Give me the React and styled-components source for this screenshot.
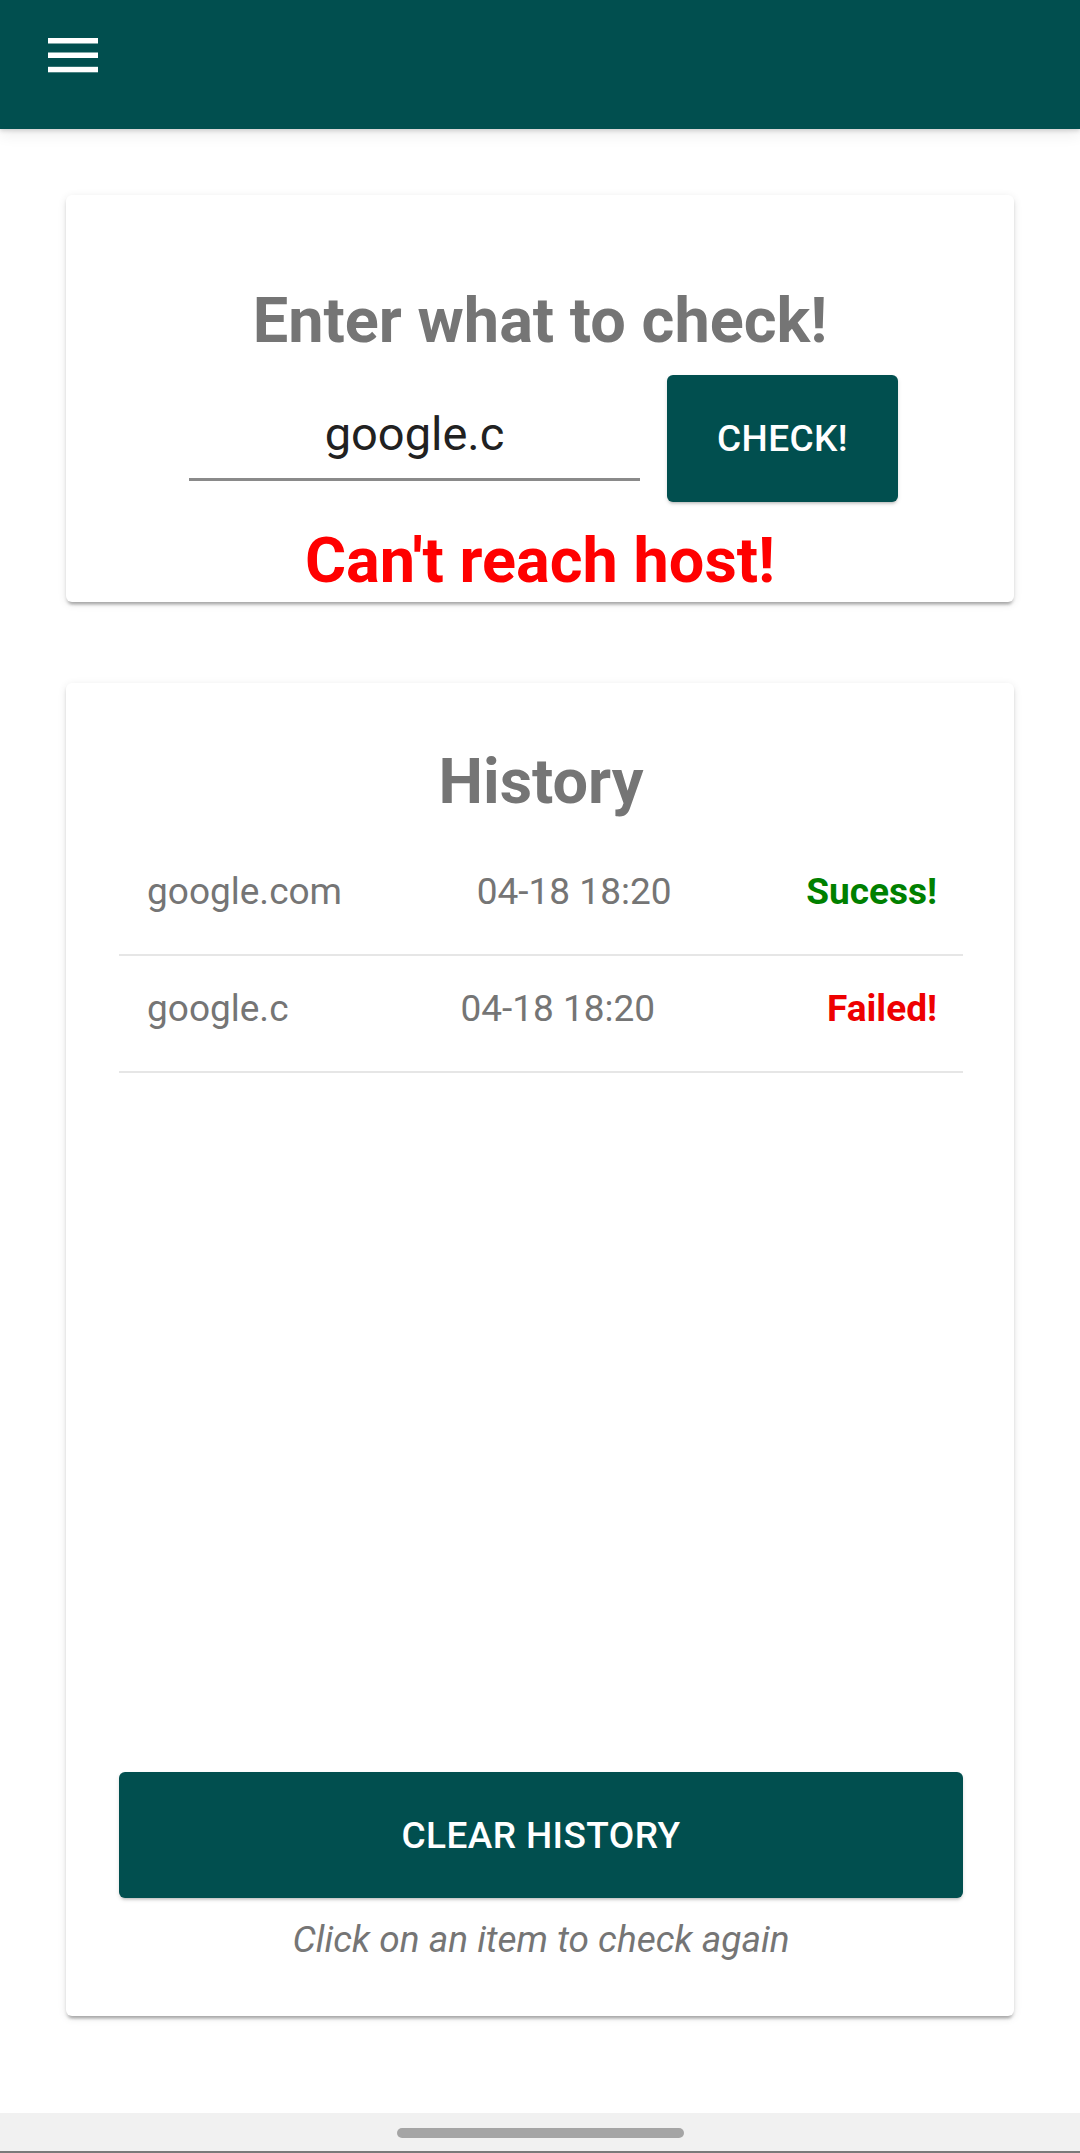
import React from "react";
import styled, { createGlobalStyle } from "styled-components";

const GlobalStyle = createGlobalStyle`
  html, body {
    margin: 0;
    padding: 0;
    background: #fff;
    font-family: Roboto, "Noto Sans", "Liberation Sans", sans-serif;
  }
  * {
    box-sizing: border-box;
  }
`;

const history = [
  { host: "google.com", time: "04-18 18:20", ok: true },
  { host: "google.c", time: "04-18 18:20", ok: false }
];

const App = () => {
  return (
    <Screen>
      <GlobalStyle />
      <TopBar>
        <MenuButton aria-label="menu">
          <svg width="50" height="35" viewBox="0 0 50 35">
            <rect x="0" y="0" width="50" height="5.5" fill="#fff" />
            <rect x="0" y="14.5" width="50" height="5.5" fill="#fff" />
            <rect x="0" y="28.8" width="50" height="5.5" fill="#fff" />
          </svg>
        </MenuButton>
      </TopBar>

      <Main>
        <CheckCard>
          <Title>Enter what to check!</Title>
          <CheckRow>
            <HostInput defaultValue="google.c" />
            <CheckButton>CHECK!</CheckButton>
          </CheckRow>
          <ErrorText>Can't reach host!</ErrorText>
        </CheckCard>

        <HistoryCard>
          <Title>History</Title>
          <List>
            {history.map((item, i) => (
              <Row key={i}>
                <Cell>{item.host}</Cell>
                <Cell>{item.time}</Cell>
                <Status ok={item.ok}>{item.ok ? "Sucess!" : "Failed!"}</Status>
              </Row>
            ))}
          </List>
          <ClearButton>CLEAR HISTORY</ClearButton>
          <Hint>Click on an item to check again</Hint>
        </HistoryCard>
      </Main>

      <NavBar>
        <NavPill />
      </NavBar>
    </Screen>
  );
};

const Screen = styled.div`
  display: flex;
  flex-direction: column;
  min-height: 2153px;
`;

const TopBar = styled.header`
  height: 129px;
  background: #014f4f;
  box-shadow: 0 2px 4px rgba(0, 0, 0, 0.14), 0 6px 14px rgba(0, 0, 0, 0.07);
  display: flex;
  align-items: flex-start;
  padding: 38px 0 0 48px;
  position: relative;
  z-index: 1;
`;

const MenuButton = styled.button`
  border: 0;
  background: none;
  padding: 0;
  line-height: 0;
  cursor: pointer;
`;

const Main = styled.main`
  flex: 1;
  display: flex;
  flex-direction: column;
  padding: 66px 66px 0;
`;

const Card = styled.section`
  background: #fff;
  border-radius: 6px;
  box-shadow: 0 5px 3px -3px rgba(0, 0, 0, 0.2), 0 3px 3px rgba(0, 0, 0, 0.12),
    0 2px 8px rgba(0, 0, 0, 0.1);
  display: flex;
  flex-direction: column;
  align-items: center;
`;

const CheckCard = styled(Card)`
  padding: 89px 0 4px;
`;

const HistoryCard = styled(Card)`
  margin-top: 81px;
  height: 1333px;
  padding: 62px 51px 55px 53px;
  align-items: stretch;
`;

const Title = styled.h2`
  margin: 0;
  font-size: 63px;
  line-height: 74px;
  font-weight: 700;
  color: #757575;
  text-align: center;
`;

const CheckRow = styled.div`
  margin-top: 17px;
  display: flex;
  align-items: flex-start;
  gap: 27px;
  margin-left: 7px;
`;

const HostInput = styled.input`
  width: 451px;
  height: 106px;
  padding: 31px 0 17px;
  border: 0;
  border-bottom: 3px solid #8a8a8a;
  outline: none;
  background: transparent;
  font-family: Roboto, sans-serif;
  font-size: 47px;
  line-height: 55px;
  color: #212121;
  text-align: center;
`;

const Button = styled.button`
  border: 0;
  border-radius: 6px;
  background: #014f4f;
  color: #fff;
  font-family: Roboto, sans-serif;
  font-weight: 500;
  font-size: 37px;
  letter-spacing: 0.4px;
  cursor: pointer;
  box-shadow: 0 3px 3px -2px rgba(0, 0, 0, 0.2), 0 2px 4px rgba(0, 0, 0, 0.12);
`;

const CheckButton = styled(Button)`
  width: 231px;
  height: 127px;
`;

const ClearButton = styled(Button)`
  margin-top: auto;
  height: 126px;
  width: 100%;
`;

const ErrorText = styled.p`
  margin: 22px 0 0;
  font-size: 63px;
  line-height: 74px;
  font-weight: 700;
  color: #f00;
`;

const List = styled.ul`
  list-style: none;
  margin: 20px 0 0;
  padding: 0;
`;

const Row = styled.li`
  display: flex;
  justify-content: space-between;
  align-items: baseline;
  padding: 31px 26px 41px 28px;
  border-bottom: 2px solid #e6e6e6;
  cursor: pointer;
`;

const Cell = styled.span`
  font-size: 37px;
  line-height: 43px;
  color: #757575;
`;

const Status = styled(Cell)`
  font-weight: 700;
  color: ${p => (p.ok ? "#008000" : "#ee0000")};
`;

const Hint = styled.p`
  margin: 20px 0 0;
  font-size: 37px;
  line-height: 43px;
  font-style: italic;
  color: #757575;
  text-align: center;
`;

const NavBar = styled.footer`
  height: 40px;
  background: #f1f1f1;
  border-bottom: 2px solid #7a7a7a;
  display: flex;
  justify-content: center;
  padding-top: 15px;
`;

const NavPill = styled.div`
  width: 287px;
  height: 10px;
  border-radius: 5px;
  background: #a5a5a5;
`;

export default App;
